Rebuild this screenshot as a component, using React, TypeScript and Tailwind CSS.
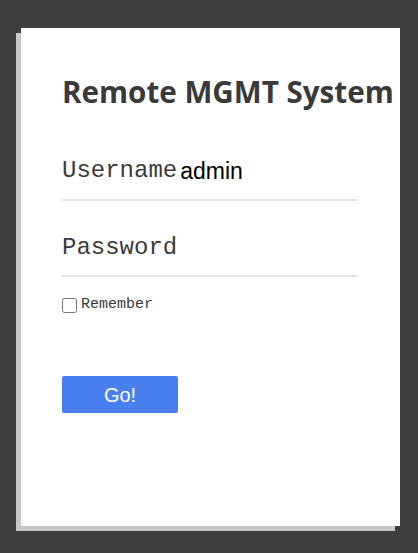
const App = () => {
  return (
    <div className="w-[418px] h-[553px] bg-[#3d3d3d] pt-[28px] pl-[21px] overflow-hidden">
      <div className="w-[379px] h-[498px] bg-white shadow-[-5px_5px_0_#c8c8c8] pl-[41px] pt-[46px]">
        <h1 className="font-['Open_Sans',sans-serif] font-bold text-[29.6px] leading-[36px] text-[#3a3a3a] whitespace-nowrap">
          Remote MGMT System
        </h1>
        <div className="w-[295px] mt-[46px]">
          <div className="flex items-end h-[45px] border-b-2 border-[#e3e3e3] pb-[14px]">
            <span className="font-['Liberation_Mono',monospace] text-[24px] leading-[28px] text-[#3a3a3a]">Username</span>
            <span className="font-['Liberation_Sans',sans-serif] text-[23px] leading-[28px] text-black ml-[3px]">admin</span>
          </div>
          <div className="flex items-end h-[76px] border-b-2 border-[#e3e3e3] pb-[13px]">
            <span className="font-['Liberation_Mono',monospace] text-[24px] leading-[28px] text-[#3a3a3a]">Password</span>
          </div>
        </div>
        <label className="flex items-center mt-[20px] gap-[4px]">
          <input type="checkbox" className="w-[15px] h-[15px] m-0" />
          <span className="font-['Liberation_Mono',monospace] text-[15px] leading-[16px] text-[#3a3a3a]">Remember</span>
        </label>
        <button className="mt-[63px] w-[116px] h-[37px] bg-[#4a7ff0] rounded-[2px] text-white font-['Liberation_Sans',sans-serif] text-[20px]">
          Go!
        </button>
      </div>
    </div>
  );
};

export default App;
